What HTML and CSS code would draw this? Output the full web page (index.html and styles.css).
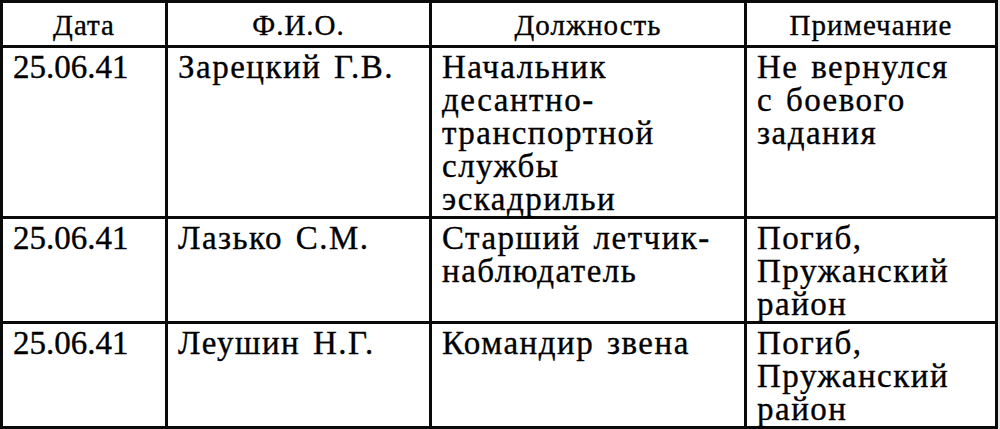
FILE: index.html
```html
<!DOCTYPE html>
<html lang="ru">
<head>
<meta charset="utf-8">
<link rel="stylesheet" href="styles.css">
</head>
<body>
<table class="roster">
  <colgroup>
    <col class="c-date">
    <col class="c-name">
    <col class="c-pos">
    <col class="c-note">
  </colgroup>
  <thead>
    <tr>
      <th>Дата</th>
      <th>Ф.И.О.</th>
      <th>Должность</th>
      <th>Примечание</th>
    </tr>
  </thead>
  <tbody>
    <tr class="r1">
      <td class="date">25.06.41</td>
      <td>Зарецкий Г.В.</td>
      <td>Начальник<br>десантно-<br>транспортной<br>службы<br>эскадрильи</td>
      <td>Не вернулся<br>с боевого<br>задания</td>
    </tr>
    <tr>
      <td class="date">25.06.41</td>
      <td>Лазько С.М.</td>
      <td>Старший летчик-<br>наблюдатель</td>
      <td>Погиб,<br>Пружанский<br>район</td>
    </tr>
    <tr>
      <td class="date">25.06.41</td>
      <td>Леушин Н.Г.</td>
      <td>Командир звена</td>
      <td>Погиб,<br>Пружанский<br>район</td>
    </tr>
  </tbody>
</table>
</body>
</html>
```

FILE: styles.css
```css
html {
  background: #e6e6e6;
}
body {
  margin: 0;
  background: #e6e6e6;
  font-family: "Liberation Serif", "Times New Roman", serif;
  color: #000;
}
.roster {
  border-collapse: collapse;
  table-layout: fixed;
  width: 998px;
  background: #fff;
}
.c-date { width: 165px; }
.c-name { width: 264px; }
.c-pos { width: 315px; }
.c-note { width: 251px; }
.roster th,
.roster td {
  border: 3px solid #0a0a0a;
  -webkit-text-stroke: 0.35px #000;
}
.roster th {
  font-weight: normal;
  font-size: 29px;
  line-height: 33px;
  letter-spacing: 1px;
  height: 40px;
  padding: 2px 0 0 0;
  text-align: center;
  vertical-align: middle;
}
.roster td {
  font-size: 33px;
  line-height: 33px;
  letter-spacing: 1.5px;
  word-spacing: 3px;
  padding: 3px 0 0 10px;
  vertical-align: top;
  text-align: left;
  white-space: nowrap;
}
.roster td.date {
  letter-spacing: 0;
}
```
